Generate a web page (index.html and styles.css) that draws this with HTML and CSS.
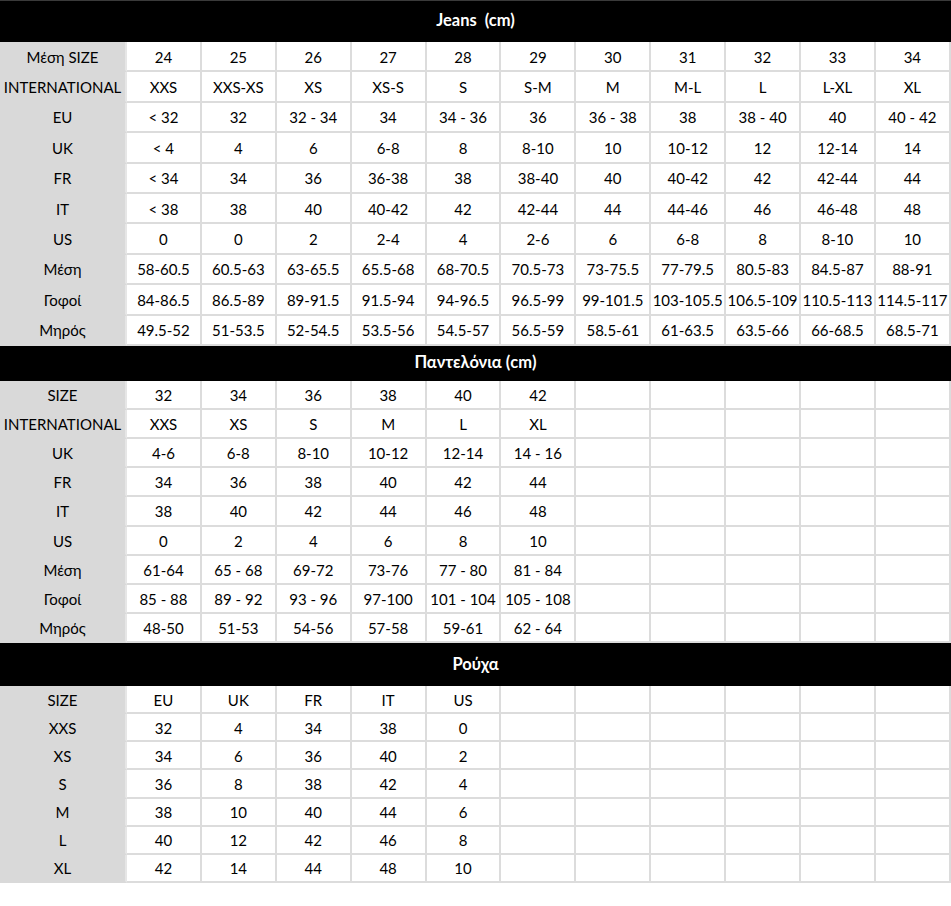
FILE: index.html
```html
<!DOCTYPE html>
<html lang="el">
<head>
<meta charset="utf-8">
<title>Size chart</title>
<link rel="stylesheet" href="styles.css">
</head>
<body>
<div class="chart">
  <div class="bar bar-1">Jeans &nbsp;(cm)</div>
  <div class="grid grid-1">
    <div class="c h">Μέση SIZE</div><div class="c">24</div><div class="c">25</div><div class="c">26</div><div class="c">27</div><div class="c">28</div><div class="c">29</div><div class="c">30</div><div class="c">31</div><div class="c">32</div><div class="c">33</div><div class="c">34</div>
    <div class="c h">INTERNATIONAL</div><div class="c">XXS</div><div class="c">XXS-XS</div><div class="c">XS</div><div class="c">XS-S</div><div class="c">S</div><div class="c">S-M</div><div class="c">M</div><div class="c">M-L</div><div class="c">L</div><div class="c">L-XL</div><div class="c">XL</div>
    <div class="c h">EU</div><div class="c">&lt; 32</div><div class="c">32</div><div class="c">32 - 34</div><div class="c">34</div><div class="c">34 - 36</div><div class="c">36</div><div class="c">36 - 38</div><div class="c">38</div><div class="c">38 - 40</div><div class="c">40</div><div class="c">40 - 42</div>
    <div class="c h">UK</div><div class="c">&lt; 4</div><div class="c">4</div><div class="c">6</div><div class="c">6-8</div><div class="c">8</div><div class="c">8-10</div><div class="c">10</div><div class="c">10-12</div><div class="c">12</div><div class="c">12-14</div><div class="c">14</div>
    <div class="c h">FR</div><div class="c">&lt; 34</div><div class="c">34</div><div class="c">36</div><div class="c">36-38</div><div class="c">38</div><div class="c">38-40</div><div class="c">40</div><div class="c">40-42</div><div class="c">42</div><div class="c">42-44</div><div class="c">44</div>
    <div class="c h">IT</div><div class="c">&lt; 38</div><div class="c">38</div><div class="c">40</div><div class="c">40-42</div><div class="c">42</div><div class="c">42-44</div><div class="c">44</div><div class="c">44-46</div><div class="c">46</div><div class="c">46-48</div><div class="c">48</div>
    <div class="c h">US</div><div class="c">0</div><div class="c">0</div><div class="c">2</div><div class="c">2-4</div><div class="c">4</div><div class="c">2-6</div><div class="c">6</div><div class="c">6-8</div><div class="c">8</div><div class="c">8-10</div><div class="c">10</div>
    <div class="c h">Μέση</div><div class="c">58-60.5</div><div class="c">60.5-63</div><div class="c">63-65.5</div><div class="c">65.5-68</div><div class="c">68-70.5</div><div class="c">70.5-73</div><div class="c">73-75.5</div><div class="c">77-79.5</div><div class="c">80.5-83</div><div class="c">84.5-87</div><div class="c">88-91</div>
    <div class="c h">Γοφοί</div><div class="c">84-86.5</div><div class="c">86.5-89</div><div class="c">89-91.5</div><div class="c">91.5-94</div><div class="c">94-96.5</div><div class="c">96.5-99</div><div class="c">99-101.5</div><div class="c">103-105.5</div><div class="c">106.5-109</div><div class="c">110.5-113</div><div class="c">114.5-117</div>
    <div class="c h">Μηρός</div><div class="c">49.5-52</div><div class="c">51-53.5</div><div class="c">52-54.5</div><div class="c">53.5-56</div><div class="c">54.5-57</div><div class="c">56.5-59</div><div class="c">58.5-61</div><div class="c">61-63.5</div><div class="c">63.5-66</div><div class="c">66-68.5</div><div class="c">68.5-71</div>
  </div>

  <div class="bar bar-2">Παντελόνια (cm)</div>
  <div class="grid grid-2">
    <div class="c h">SIZE</div><div class="c">32</div><div class="c">34</div><div class="c">36</div><div class="c">38</div><div class="c">40</div><div class="c">42</div><div class="c"></div><div class="c"></div><div class="c"></div><div class="c"></div><div class="c"></div>
    <div class="c h">INTERNATIONAL</div><div class="c">XXS</div><div class="c">XS</div><div class="c">S</div><div class="c">M</div><div class="c">L</div><div class="c">XL</div><div class="c"></div><div class="c"></div><div class="c"></div><div class="c"></div><div class="c"></div>
    <div class="c h">UK</div><div class="c">4-6</div><div class="c">6-8</div><div class="c">8-10</div><div class="c">10-12</div><div class="c">12-14</div><div class="c">14 - 16</div><div class="c"></div><div class="c"></div><div class="c"></div><div class="c"></div><div class="c"></div>
    <div class="c h">FR</div><div class="c">34</div><div class="c">36</div><div class="c">38</div><div class="c">40</div><div class="c">42</div><div class="c">44</div><div class="c"></div><div class="c"></div><div class="c"></div><div class="c"></div><div class="c"></div>
    <div class="c h">IT</div><div class="c">38</div><div class="c">40</div><div class="c">42</div><div class="c">44</div><div class="c">46</div><div class="c">48</div><div class="c"></div><div class="c"></div><div class="c"></div><div class="c"></div><div class="c"></div>
    <div class="c h">US</div><div class="c">0</div><div class="c">2</div><div class="c">4</div><div class="c">6</div><div class="c">8</div><div class="c">10</div><div class="c"></div><div class="c"></div><div class="c"></div><div class="c"></div><div class="c"></div>
    <div class="c h">Μέση</div><div class="c">61-64</div><div class="c">65 - 68</div><div class="c">69-72</div><div class="c">73-76</div><div class="c">77 - 80</div><div class="c">81 - 84</div><div class="c"></div><div class="c"></div><div class="c"></div><div class="c"></div><div class="c"></div>
    <div class="c h">Γοφοί</div><div class="c">85 - 88</div><div class="c">89 - 92</div><div class="c">93 - 96</div><div class="c">97-100</div><div class="c">101 - 104</div><div class="c">105 - 108</div><div class="c"></div><div class="c"></div><div class="c"></div><div class="c"></div><div class="c"></div>
    <div class="c h">Μηρός</div><div class="c">48-50</div><div class="c">51-53</div><div class="c">54-56</div><div class="c">57-58</div><div class="c">59-61</div><div class="c">62 - 64</div><div class="c"></div><div class="c"></div><div class="c"></div><div class="c"></div><div class="c"></div>
  </div>

  <div class="bar bar-3">Ρούχα</div>
  <div class="grid grid-3">
    <div class="c h">SIZE</div><div class="c">EU</div><div class="c">UK</div><div class="c">FR</div><div class="c">IT</div><div class="c">US</div><div class="c"></div><div class="c"></div><div class="c"></div><div class="c"></div><div class="c"></div><div class="c"></div>
    <div class="c h">XXS</div><div class="c">32</div><div class="c">4</div><div class="c">34</div><div class="c">38</div><div class="c">0</div><div class="c"></div><div class="c"></div><div class="c"></div><div class="c"></div><div class="c"></div><div class="c"></div>
    <div class="c h">XS</div><div class="c">34</div><div class="c">6</div><div class="c">36</div><div class="c">40</div><div class="c">2</div><div class="c"></div><div class="c"></div><div class="c"></div><div class="c"></div><div class="c"></div><div class="c"></div>
    <div class="c h">S</div><div class="c">36</div><div class="c">8</div><div class="c">38</div><div class="c">42</div><div class="c">4</div><div class="c"></div><div class="c"></div><div class="c"></div><div class="c"></div><div class="c"></div><div class="c"></div>
    <div class="c h">M</div><div class="c">38</div><div class="c">10</div><div class="c">40</div><div class="c">44</div><div class="c">6</div><div class="c"></div><div class="c"></div><div class="c"></div><div class="c"></div><div class="c"></div><div class="c"></div>
    <div class="c h">L</div><div class="c">40</div><div class="c">12</div><div class="c">42</div><div class="c">46</div><div class="c">8</div><div class="c"></div><div class="c"></div><div class="c"></div><div class="c"></div><div class="c"></div><div class="c"></div>
    <div class="c h">XL</div><div class="c">42</div><div class="c">14</div><div class="c">44</div><div class="c">48</div><div class="c">10</div><div class="c"></div><div class="c"></div><div class="c"></div><div class="c"></div><div class="c"></div><div class="c"></div>
  </div>
</div>
</body>
</html>
```

FILE: styles.css
```css
html, body {
  margin: 0;
  padding: 0;
  background: #ffffff;
}

.chart {
  width: 951px;
  display: flex;
  flex-direction: column;
  font-family: Lato, "Open Sans", "Noto Sans", sans-serif;
  font-size: 15px;
  color: #000000;
}

.bar {
  background: #000000;
  color: #ffffff;
  font-weight: 700;
  font-size: 16.5px;
  display: flex;
  align-items: center;
  justify-content: center;
  box-sizing: border-box;
}

.bar-1 {
  height: 42px;
  border-top: 1px solid #3a3a3a;
  padding-bottom: 3px;
}

.bar-2 {
  height: 35px;
  padding-bottom: 3px;
}

.bar-3 {
  height: 43px;
  padding-bottom: 1px;
}

.grid {
  display: grid;
  grid-template-columns: 127px repeat(11, 74.9px);
}

.grid-1 {
  height: 304px;
  grid-template-rows: repeat(10, 1fr);
}

.grid-2 {
  height: 262px;
  grid-template-rows: repeat(9, 1fr);
}

.grid-3 {
  height: 197px;
  grid-template-rows: repeat(7, 1fr);
}

.c {
  display: flex;
  align-items: center;
  justify-content: center;
  padding-top: 1px;
  border-right: 2px solid #dcdcdc;
  border-bottom: 2px solid #dcdcdc;
  white-space: nowrap;
  min-width: 0;
}

.h {
  background: #d9d9d9;
  border-right: 2px solid #e6e6e6;
  border-bottom-color: #d9d9d9;
}
```
